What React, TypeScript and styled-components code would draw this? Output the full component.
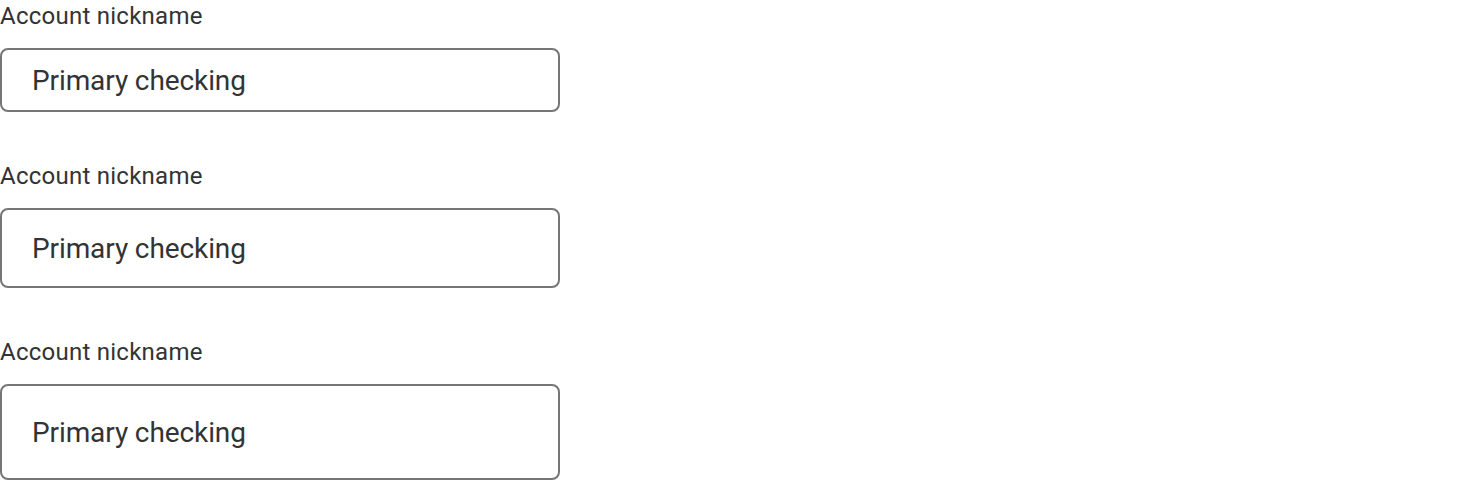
import React from 'react';
import styled, { createGlobalStyle } from 'styled-components';

type FieldSize = 'small' | 'medium' | 'large';

const GlobalStyle = createGlobalStyle`
  html, body {
    margin: 0;
    padding: 0;
    background: #ffffff;
  }

  body {
    font-family: Roboto, "Liberation Sans", Arial, sans-serif;
  }
`;

const heights: Record<FieldSize, number> = {
  small: 64,
  medium: 80,
  large: 96,
};

const Page = styled.div`
  display: flex;
  flex-direction: column;
  gap: 48px;
  width: 560px;
`;

const Field = styled.div`
  display: flex;
  flex-direction: column;
  gap: 16px;
`;

const Label = styled.label`
  font-size: 24px;
  line-height: 32px;
  font-weight: 400;
  letter-spacing: 0.25px;
  color: #333333;
`;

const Input = styled.input<{ $size: FieldSize }>`
  box-sizing: border-box;
  width: 560px;
  height: ${(props) => heights[props.$size]}px;
  margin: 0;
  padding: 0 30px;
  border: 2px solid #767676;
  border-radius: 8px;
  background: #ffffff;
  font-family: Roboto, "Liberation Sans", Arial, sans-serif;
  font-size: 28px;
  letter-spacing: -0.1px;
  color: #333333;
  outline: none;
`;

const fields: FieldSize[] = ['small', 'medium', 'large'];

const App = () => (
  <>
    <GlobalStyle />
    <Page>
      { fields.map((size) => (
        <Field key={ size }>
          <Label htmlFor={ `nickname-${size}` }>Account nickname</Label>
          <Input
            id={ `nickname-${size}` }
            $size={ size }
            defaultValue="Primary checking"
          />
        </Field>
      )) }
    </Page>
  </>
);

export default App;
